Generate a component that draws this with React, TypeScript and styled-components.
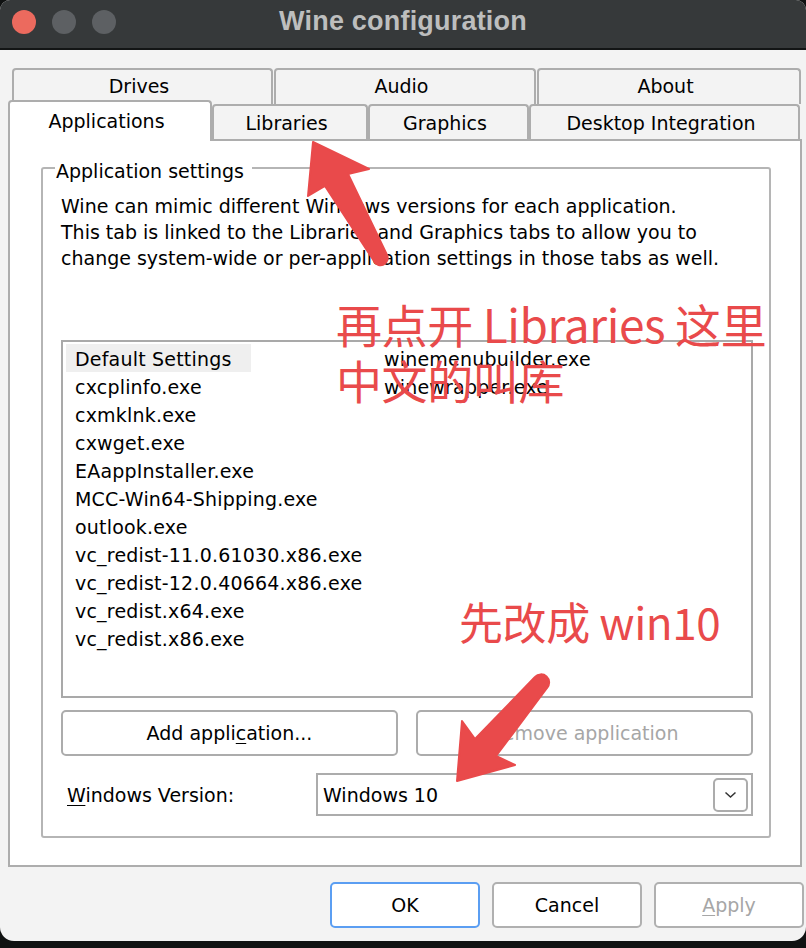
import React from "react";
import styled, { createGlobalStyle } from "styled-components";

const GlobalStyle = createGlobalStyle`
  html, body { margin: 0; padding: 0; background: #101212; }
  body { width: 806px; height: 948px; overflow: hidden; }
  * { box-sizing: border-box; }
`;

const Window = styled.div`
  position: relative;
  width: 806px;
  height: 941px;
  display: flex;
  flex-direction: column;
  background: #f3f3f3;
  border-radius: 10px 10px 14px 14px;
  overflow: hidden;
  font-family: "DejaVu Sans", "Liberation Sans", sans-serif;
  font-size: 19px;
  color: #000;
`;

const TitleBar = styled.div`
  flex: none;
  height: 50px;
  background: #36393a;
  border-bottom: 2px solid #131515;
  display: grid;
  grid-template-columns: 1fr auto 1fr;
  align-items: center;
  padding-bottom: 5px;
`;

const Lights = styled.div`
  display: flex;
  gap: 16px;
  padding-left: 12px;
`;

const Light = styled.span<{ $color: string }>`
  width: 24px;
  height: 24px;
  border-radius: 50%;
  background: ${(p) => p.$color};
`;

const Title = styled.div`
  font-family: "Liberation Sans", Arial, sans-serif;
  font-weight: bold;
  font-size: 27px;
  color: #bdbebe;
  letter-spacing: 0.2px;
`;

const Body = styled.div`
  flex: 1;
  display: flex;
  flex-direction: column;
  padding: 18px 0 0 8px;
`;

const TabStrip = styled.div`
  display: flex;
  flex-direction: column;
`;

const TabRow = styled.div<{ $indent: number; $front?: boolean }>`
  display: flex;
  align-items: flex-end;
  padding-left: ${(p) => p.$indent}px;
  margin-top: ${(p) => (p.$front ? -4 : 0)}px;
  position: relative;
  z-index: ${(p) => (p.$front ? 2 : 1)};
`;

const Tab = styled.div<{ $w: number; $active?: boolean; $back?: boolean }>`
  width: ${(p) => p.$w}px;
  height: ${(p) => (p.$active ? 41 : p.$back ? 36 : 35)}px;
  margin-bottom: ${(p) => (p.$active ? -2 : 0)}px;
  margin-right: ${(p) => (p.$back ? 1 : 0)}px;
  position: relative;
  z-index: ${(p) => (p.$active ? 3 : 1)};
  background: ${(p) => (p.$active ? "#ffffff" : "#f3f3f3")};
  border: 2px solid #adadad;
  border-bottom: none;
  border-radius: 4px 4px 0 0;
  display: flex;
  align-items: center;
  justify-content: center;
  padding: 0 7px ${(p) => (p.$active ? 2 : p.$back ? 2 : 0)}px 0;
  white-space: nowrap;
`;

const Panel = styled.div`
  width: 794px;
  background: #ffffff;
  border: 2px solid #adadad;
  padding: 13px 29px 27px 31px;
  position: relative;
  z-index: 1;
`;

const Group = styled.fieldset`
  margin: 0;
  min-width: 0;
  border: 2px solid #b5b5b5;
  border-radius: 3px;
  padding: 0 16px 20px 18px;
`;

const Legend = styled.legend`
  padding: 6px 8px 0 1px;
  margin-left: -6px;
  line-height: 22px;
  font-size: 19px;
`;

const Description = styled.p`
  margin: 11px 0 0;
  line-height: 26px;
  white-space: nowrap;
`;

const AppList = styled.div`
  margin-top: 69px;
  height: 358px;
  border: 2px solid #a9a9a9;
  padding: 2px 3px;
  display: grid;
  grid-template-rows: repeat(11, 28px);
  grid-auto-flow: column;
  grid-auto-columns: 309px;
  align-content: start;
`;

const ListItem = styled.div<{ $selected?: boolean }>`
  justify-self: start;
  height: 28px;
  line-height: 30px;
  padding: 0 19px 0 9px;
  white-space: nowrap;
  letter-spacing: 0.2px;
  background: ${(p) => (p.$selected ? "#efefef" : "transparent")};
`;

const ButtonRow = styled.div`
  display: grid;
  grid-template-columns: 1fr 1fr;
  gap: 18px;
  margin-top: 12px;
`;

const PushButton = styled.div<{ $disabled?: boolean }>`
  height: 46px;
  border: 2px solid #acacac;
  border-radius: 5px;
  background: #ffffff;
  color: ${(p) => (p.$disabled ? "#a6a6a6" : "#000")};
  display: flex;
  align-items: center;
  justify-content: center;
  white-space: nowrap;
`;

const VersionRow = styled.div`
  display: flex;
  align-items: center;
  margin-top: 17px;
`;

const VersionLabel = styled.div`
  width: 255px;
  padding-left: 6px;
  white-space: nowrap;
`;

const Combo = styled.div`
  flex: 1;
  height: 43px;
  border: 2px solid #acacac;
  display: flex;
  align-items: center;
  justify-content: space-between;
  padding: 0 3px 0 5px;
`;

const DropButton = styled.div`
  width: 35px;
  height: 34px;
  border: 2px solid #acacac;
  border-radius: 5px;
  display: flex;
  align-items: center;
  justify-content: center;
`;

const Footer = styled.div`
  display: flex;
  justify-content: flex-end;
  gap: 12px;
  padding: 15px 2px 0 0;
`;

const DialogButton = styled.div<{ $default?: boolean; $disabled?: boolean }>`
  width: 150px;
  height: 46px;
  border: 2px solid ${(p) => (p.$default ? "#5b9ef2" : "#b0b0b0")};
  border-radius: 5px;
  background: #ffffff;
  color: ${(p) => (p.$disabled ? "#a6a6a6" : "#000")};
  display: flex;
  align-items: center;
  justify-content: center;
`;

const Mnemonic = styled.span`
  text-decoration: underline;
  text-underline-offset: 3px;
`;

const Overlay = styled.svg`
  position: absolute;
  left: 0;
  top: 0;
  width: 806px;
  height: 941px;
  pointer-events: none;
  z-index: 10;
`;

const Note = styled.div<{ $x: number; $y: number; $size: number }>`
  position: absolute;
  left: ${(p) => p.$x}px;
  top: ${(p) => p.$y}px;
  z-index: 11;
  color: #e94a4b;
  font-family: "Noto Sans CJK SC", "Noto Sans", sans-serif;
  font-size: ${(p) => p.$size}px;
  line-height: 56px;
  letter-spacing: -0.4px;
  white-space: nowrap;
`;

const apps = [
  "Default Settings",
  "cxcplinfo.exe",
  "cxmklnk.exe",
  "cxwget.exe",
  "EAappInstaller.exe",
  "MCC-Win64-Shipping.exe",
  "outlook.exe",
  "vc_redist-11.0.61030.x86.exe",
  "vc_redist-12.0.40664.x86.exe",
  "vc_redist.x64.exe",
  "vc_redist.x86.exe",
  "winemenubuilder.exe",
  "winewrapper.exe",
];

export default function App() {
  return (
    <>
      <GlobalStyle />
      <Window>
        <TitleBar>
          <Lights>
            <Light $color="#ec6a5e" />
            <Light $color="#5d6063" />
            <Light $color="#5d6063" />
          </Lights>
          <Title>Wine configuration</Title>
          <div />
        </TitleBar>
        <Body>
          <TabStrip>
            <TabRow $indent={4}>
              <Tab $w={261} $back>Drives</Tab>
              <Tab $w={262} $back>Audio</Tab>
              <Tab $w={264} $back>About</Tab>
            </TabRow>
            <TabRow $indent={0} $front>
              <Tab $w={204} $active>Applications</Tab>
              <Tab $w={156}>Libraries</Tab>
              <Tab $w={161}>Graphics</Tab>
              <Tab $w={271}>Desktop Integration</Tab>
            </TabRow>
          </TabStrip>
          <Panel>
            <Group>
              <Legend>Application settings</Legend>
              <Description>
                Wine can mimic different Windows versions for each application.
                <br />
                This tab is linked to the Libraries and Graphics tabs to allow you to
                <br />
                change system-wide or per-application settings in those tabs as well.
              </Description>
              <AppList>
                {apps.map((a, i) => (
                  <ListItem key={a} $selected={i === 0}>
                    {a}
                  </ListItem>
                ))}
              </AppList>
              <ButtonRow>
                <PushButton>
                  Add appli<Mnemonic>c</Mnemonic>ation...
                </PushButton>
                <PushButton $disabled>Remove application</PushButton>
              </ButtonRow>
              <VersionRow>
                <VersionLabel>
                  <Mnemonic>W</Mnemonic>indows Version:
                </VersionLabel>
                <Combo>
                  <span>Windows 10</span>
                  <DropButton>
                    <svg width="13" height="8" viewBox="0 0 13 8">
                      <polyline
                        points="1.5,1.5 6.5,6 11.5,1.5"
                        fill="none"
                        stroke="#333"
                        strokeWidth="1.5"
                      />
                    </svg>
                  </DropButton>
                </Combo>
              </VersionRow>
            </Group>
          </Panel>
          <Footer>
            <DialogButton $default>OK</DialogButton>
            <DialogButton>Cancel</DialogButton>
            <DialogButton $disabled>
              <Mnemonic>A</Mnemonic>pply
            </DialogButton>
          </Footer>
        </Body>

        <Overlay viewBox="0 0 806 941">
          <path
            d="M313 142 L369 169 L348 174 L387 255 A7 7 0 0 1 374 261 L325 186 L308 196 Z"
            fill="#e94a4b"
            stroke="#e94a4b"
            strokeWidth="2"
            strokeLinejoin="round"
          />
          <path
            d="M457 781 L462 721 L475 739 L535 677 A8 8 0 0 1 547 688 L496 756 L515 765 Z"
            fill="#e94a4b"
            stroke="#e94a4b"
            strokeWidth="2"
            strokeLinejoin="round"
          />
        </Overlay>
        <Note $x={336} $y={295} $size={46}>
          再点开 Libraries 这里
          <br />
          中文的叫库
        </Note>
        <Note $x={459} $y={593} $size={44}>
          先改成 win10
        </Note>
      </Window>
    </>
  );
}
